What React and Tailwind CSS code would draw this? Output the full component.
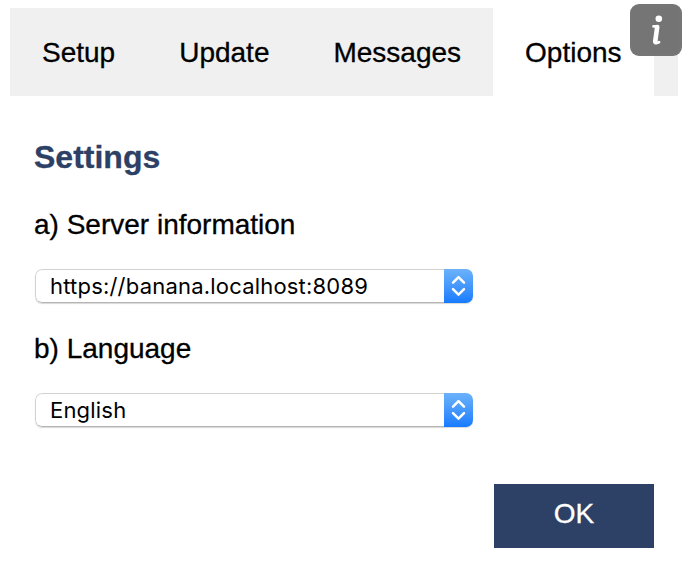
import React from "react";

const tabs = ["Setup", "Update", "Messages", "Options"];

function Tabs({ active }) {
  return (
    <nav className="mx-[10px] mt-2 flex h-[88px] bg-[#f0f0f0]">
      {tabs.map((tab) => (
        <button
          key={tab}
          className={
            tab === active
              ? "bg-white px-8 pt-0.5 text-[28px] leading-8"
              : "px-8 pt-0.5 text-[28px] leading-8"
          }
        >
          {tab}
        </button>
      ))}
    </nav>
  );
}

function InfoBadge() {
  return (
    <button
      aria-label="Information"
      className="absolute top-1 left-[630px] h-[52px] w-[52px] rounded-[9px] border-2 border-[#777]/60 bg-[#666]/90 bg-clip-border"
    >
      <svg viewBox="0 0 48 48" className="h-12 w-12" fill="none" stroke="#fff">
        <circle cx="26.8" cy="12.8" r="3.3" fill="#fff" stroke="none" />
        <path
          d="M21.6 20.4H25.6L23 35.4Q22.7 37.4 24.2 37.2Q26 37 27 36.2"
          strokeWidth="2.8"
          strokeLinejoin="round"
          strokeLinecap="round"
        />
        <path d="M25.2 21L23.2 35.6" strokeWidth="4.6" strokeLinecap="round" />
      </svg>
    </button>
  );
}

function SelectField({ value }) {
  return (
    <div className="ml-px flex h-[34px] w-[438px] overflow-hidden rounded-[7px] shadow-[0_1px_1px_rgba(0,0,0,0.16)]">
      <div className="flex flex-1 items-center rounded-l-[7px] border border-r-0 border-[#d2d2d2] border-b-[#b5b5b5] bg-white pl-[14px]">
        <span className="font-['Inter',sans-serif] text-[22px] leading-7 tracking-[0.2px] [-webkit-text-stroke:0px]">
          {value}
        </span>
      </div>
      <div className="flex w-[29px] items-center justify-center bg-linear-to-b from-[#6bb2fa] to-[#147bff]">
        <svg
          viewBox="0 0 29 34"
          className="h-[34px] w-[29px]"
          fill="none"
          stroke="#fff"
          strokeWidth="2.5"
          strokeLinecap="round"
          strokeLinejoin="round"
        >
          <path d="M9 13.7L14.5 8.2L20 13.7M9 20.2L14.5 25.7L20 20.2" />
        </svg>
      </div>
    </div>
  );
}

export default function App() {
  return (
    <div className="relative flow-root h-[574px] w-[688px] overflow-hidden bg-white font-['Liberation_Sans',Arial,sans-serif] text-black [-webkit-text-stroke:0.3px]">
      <Tabs active="Options" />
      <InfoBadge />
      <main className="flex flex-col pl-[34px]">
        <h1 className="mt-[43px] text-[32px] leading-9 font-bold text-[#2d4066]">
          Settings
        </h1>
        <h2 className="mt-[34px] text-[28px] leading-8">a) Server information</h2>
        <div className="mt-[28px]">
          <SelectField value="https://banana.localhost:8089" />
        </div>
        <h2 className="mt-[30px] text-[28px] leading-8">b) Language</h2>
        <div className="mt-[28px]">
          <SelectField value="English" />
        </div>
        <button className="mt-[57px] mr-[34px] flex h-16 w-40 items-center justify-center self-end bg-[#2d4066] pb-1 text-[28px] leading-8 text-white">
          OK
        </button>
      </main>
    </div>
  );
}
